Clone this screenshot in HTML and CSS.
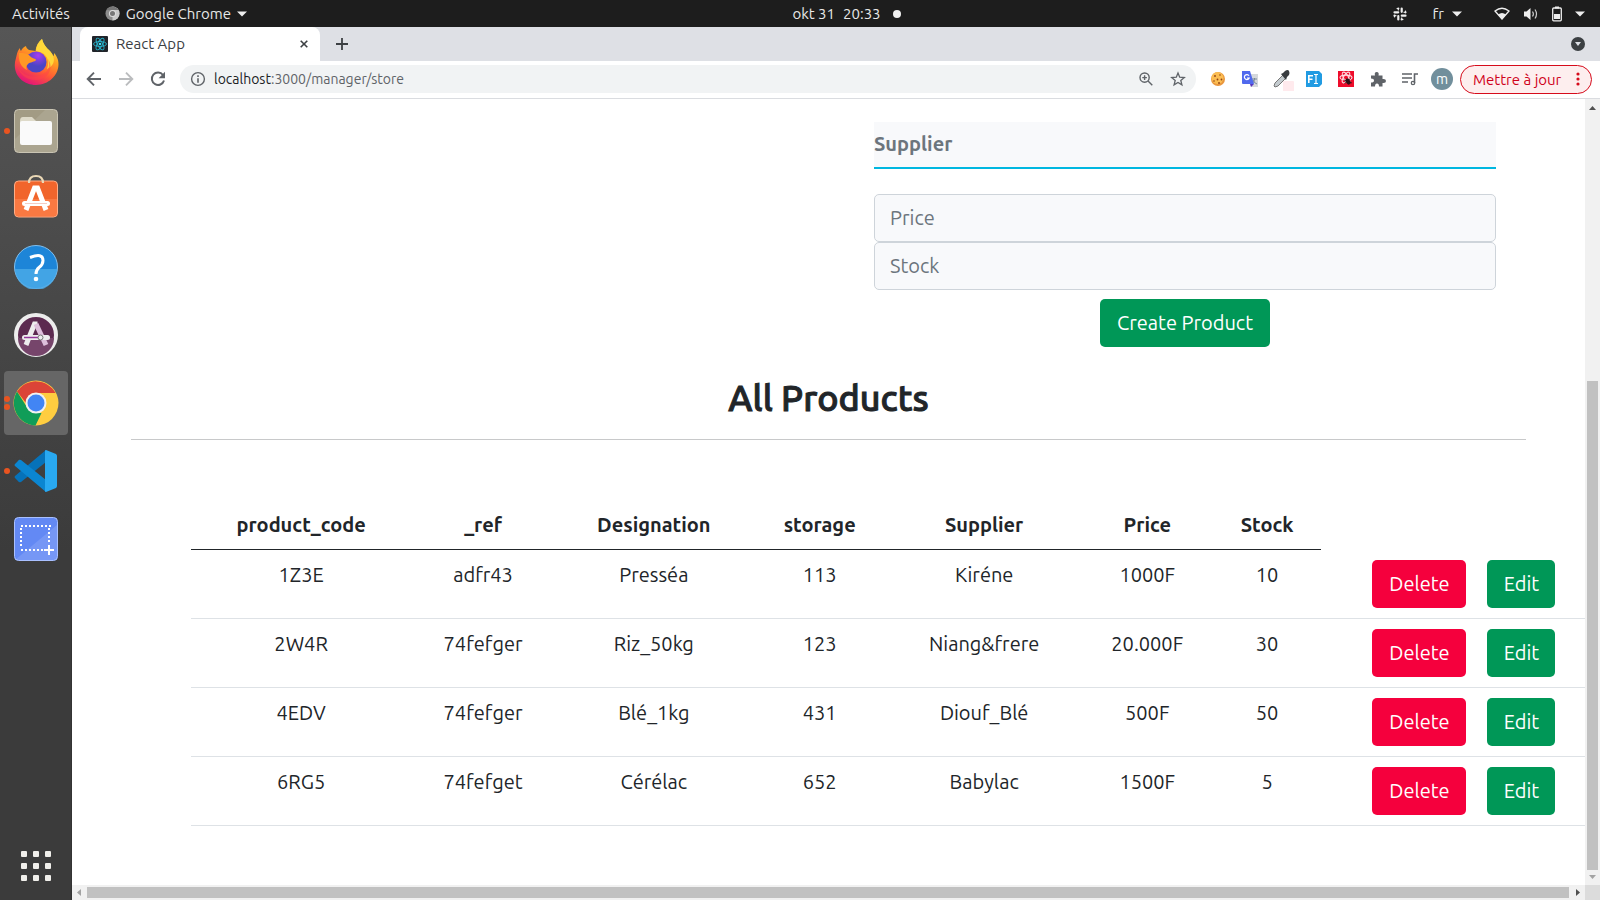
FILE: index.html
```html
<!DOCTYPE html>
<html lang="fr">
<head>
<meta charset="utf-8">
<title>React App</title>
<link rel="stylesheet" href="styles.css">
</head>
<body>
<header class="topbar">
  <div class="topbar-left">
    <button class="top-item">Activités</button>
    <button class="top-item app-menu">
      <svg width="15" height="15" viewBox="0 0 16 16"><circle cx="8" cy="8" r="7.500" fill="#8c8c8c"/><path d="M8 8V.5A7.500 7.500 0 0 1 8 15.500z" fill="#c9c9c9"/><path d="M1.500 4.200A7.500 7.500 0 0 1 14.500 4.200H8z" fill="#777"/><circle cx="8" cy="8" r="3.800" fill="#ddd"/><circle cx="8" cy="8" r="2.700" fill="#777"/></svg>
      <span>Google Chrome</span>
      <svg width="10" height="6" viewBox="0 0 10 6"><path d="M0 .5h10L5 5.500z" fill="#eee"/></svg>
    </button>
  </div>
  <button class="top-item clock"><span>okt 31</span><span>20:33</span><i class="dot"></i></button>
  <div class="topbar-right">
    <svg width="14" height="14" viewBox="0 0 14 14" stroke="#eee" stroke-width="2.200" stroke-linecap="round" fill="none"><path d="M5.300 1.500v.1M8.700 1.500v3.300M1.500 5.300h3.700M12.500 5.300h-.1M1.500 8.700h.1M5.300 9.200v3.300M8.800 8.700h3.700M8.700 12.400v.1"/><path d="M4 1.500h1.300v1.600M12.500 4v1.300h-1.600M1.500 10V8.700h1.600M10 12.500H8.700v-1.600" stroke-width="1"/></svg>
    <button class="top-item lang"><span>fr</span><svg width="10" height="6" viewBox="0 0 10 6"><path d="M0 .5h10L5 5.500z" fill="#eee"/></svg></button>
    <button class="top-item status" aria-label="Système">
      <svg width="16" height="13" viewBox="0 0 16 13"><path d="M1 4Q8-1.500 15 4L8 12z" fill="none" stroke="#eee" stroke-width="1.300"/><path d="M4 7.500Q8 4.500 12 7.500L8 12.500z" fill="#eee"/></svg>
      <svg width="16" height="14" viewBox="0 0 16 14"><path d="M1 4.500h2.500L7.500 1v12L3.500 9.500H1z" fill="#eee"/><path d="M9.500 4.500q1.800 2.500 0 5M12 2.500q3 4.500 0 9" fill="none" stroke="#ccc" stroke-width="1.200"/></svg>
      <svg width="10" height="16" viewBox="0 0 10 16"><path d="M3 .5h4v2H3zM2 8h6v5H2z" fill="#eee"/><rect x=".7" y="2" width="8.600" height="12.800" rx="1" fill="none" stroke="#eee" stroke-width="1.300"/></svg>
      <svg width="10" height="6" viewBox="0 0 10 6"><path d="M0 .5h10L5 5.500z" fill="#eee"/></svg>
    </button>
  </div>
</header>
<div class="desktop">
  <nav class="dock" aria-label="Dock">
    <button class="dock-item" aria-label="Firefox"><svg width="46" height="48" viewBox="0 0 46 48">
      <defs><linearGradient id="ffx" x1=".8" y1="0" x2=".3" y2="1"><stop offset="0" stop-color="#fff44f"/><stop offset=".35" stop-color="#ffa420"/><stop offset=".65" stop-color="#ff5a35"/><stop offset="1" stop-color="#e0107d"/></linearGradient><radialGradient id="ffp" cx=".6" cy=".2"><stop offset="0" stop-color="#a83cf0"/><stop offset="1" stop-color="#4b45c4"/></radialGradient></defs>
      <path d="M29 0c-4 3-6 7-6.500 12L16 11c-2-1-3-3-3-4-3 1-4 3-5 5-1-1-1-2-1-3-3 3-3 7-4 10C-2 34 9 46 23 46s25-12 22-25c-1-3-2-5-4-7 0 1 0 3-.5 3C38 11 31 9 29 0z" fill="url(#ffx)"/>
      <path d="M29 0c-4 4-6 8-6 12 9 1 15 8 11 18 7-3 8-9 6-13C38 11 31 9 29 0z" fill="#ffd83a"/>
      <circle cx="23" cy="23" r="10.500" fill="url(#ffp)"/><path d="M6 14c5 0 8 0 11 3 2 3 6 2 6 4-1 2-6 2-8 4-2 2-2 4-1 6-6-3-9-9-8-17z" fill="#ff9824"/><path d="M4 25c3 12 19 17 29 8 3-3 4-8 2-13 6 8 1 20-11 21C13 42 5 34 4 25z" fill="#ff4348" opacity=".5"/></svg></button>
    <button class="dock-item" aria-label="Fichiers"><i class="run"></i><svg width="44" height="44" viewBox="0 0 44 44"><rect x=".5" y=".5" width="43" height="43" rx="4" fill="#a29b84" stroke="#c9c4b3"/><path d="M1 30L31 1h9q3 0 3 3v36q0 3-3 3H4q-3 0-3-3z" fill="#fff" opacity=".1"/><path d="M6 12q0-4 3-4h9l4 4h14v6H6z" fill="#dedac9"/><rect x="6" y="12" width="32" height="24" rx="2" fill="#fafafa"/></svg></button>
    <button class="dock-item" aria-label="Logiciels"><svg width="44" height="50" viewBox="0 0 44 50"><rect x=".5" y="7" width="43" height="36" rx="4" fill="#f1652c" stroke="#ffad86"/><path d="M1 25h42v14q0 3-3 3H4q-3 0-3-3z" fill="#ff8b55" opacity=".55"/><path d="M15 9q0-7 7-7t7 7" fill="none" stroke="#ead8b6" stroke-width="2.200"/><path d="M12 36L20.500 14h3L32 36" stroke="#fff" stroke-width="5" fill="none"/><rect x="8" y="27" width="28" height="5" rx="2.500" fill="#fff"/><path d="M11 29.500h22" stroke="#f5ccc2"/></svg></button>
    <button class="dock-item" aria-label="Aide"><svg width="44" height="44" viewBox="0 0 44 44"><circle cx="22" cy="22" r="21.500" fill="#1d85d8" stroke="#80bfee"/><path d="M1 24h42A21 21 0 0 1 1 24z" fill="#4cabe8" opacity=".8"/><path d="M16 12.500q13-5 13 3 0 4-4 7-3 2.500-3 6.500" fill="none" stroke="#fff" stroke-width="3"/><circle cx="22" cy="34" r="2.300" fill="#fff"/></svg></button>
    <button class="dock-item" aria-label="Mise à jour"><svg width="44" height="44" viewBox="0 0 44 44"><circle cx="22" cy="22" r="20" fill="#5c2a50" stroke="#ececec" stroke-width="4"/><path d="M4 25h36A18 18 0 0 1 4 25z" fill="#76456b"/><path d="M12 32L20.500 11h3" stroke="#eee" stroke-width="5" fill="none"/><path d="M22 11l10 21" stroke="#dec0dc" stroke-width="5"/><rect x="8" y="22" width="28" height="5" rx="2.500" fill="#eee"/><path d="M10 24.500h17" stroke="#94369a" stroke-width="1.500"/><circle cx="26.500" cy="24.500" r="2.500" fill="#eee" stroke="#777"/></svg></button>
    <button class="dock-item active" aria-label="Google Chrome"><i class="run"></i><i class="run"></i><svg width="46" height="46" viewBox="0 0 46 46"><circle cx="23" cy="23" r="22.500" fill="#ffcd40"/><path d="M4 11.500A22.500 22.500 0 0 1 42.500 13H23a10 10 0 0 0-10 10z" fill="#db4437"/><path d="M4 11.500L14.500 28q3 5 9 5h5L22.500 45.500A22.500 22.500 0 0 1 4 11.500z" fill="#109d58"/><circle cx="23" cy="23" r="10.500" fill="#f1f1f1"/><circle cx="23" cy="23" r="8.500" fill="#4285f4"/></svg></button>
    <button class="dock-item" aria-label="Visual Studio Code"><i class="run"></i><svg width="44" height="44" viewBox="0 0 44 44"><path d="M32 1v12L7 33q-2 1-3-1l-3-3q-1-1 0-2z" fill="#0672b9"/><path d="M32 43V31L7 11q-2-1-3 1l-3 3q-1 1 0 2z" fill="#0b86d1"/><path d="M32 1l10 4q1 1 1 2v30q0 1-1 2l-10 4q-1 0-1-1V2q0-1 1-1z" fill="#29a9f1"/></svg></button>
    <button class="dock-item" aria-label="Capture"><svg width="44" height="44" viewBox="0 0 44 44"><rect x=".5" y=".5" width="43" height="43" rx="4" fill="#6389f4" stroke="#a9c0ff"/><path d="M1 43L43 8v32q0 3-3 3z" fill="#fff" opacity=".12"/><path d="M7 9h30M7 33h23M35 11v16M7 11v20" fill="none" stroke="#fff" stroke-width="2" stroke-dasharray="2 2"/><path d="M35 28v10M30 33h10" stroke="#fff" stroke-width="2"/></svg></button>
    <button class="dock-item apps" aria-label="Applications"><svg width="30" height="30" viewBox="0 0 30 30" fill="#f0efeb"><rect width="6" height="6" rx="1"/><rect x="12" width="6" height="6" rx="1"/><rect x="24" width="6" height="6" rx="1"/><rect y="12" width="6" height="6" rx="1"/><rect x="12" y="12" width="6" height="6" rx="1"/><rect x="24" y="12" width="6" height="6" rx="1"/><rect y="24" width="6" height="6" rx="1"/><rect x="12" y="24" width="6" height="6" rx="1"/><rect x="24" y="24" width="6" height="6" rx="1"/></svg></button>
  </nav>
  <div class="browser">
    <div class="tabstrip">
      <div class="tab">
        <svg width="16" height="16" viewBox="0 0 16 16"><rect width="16" height="16" rx="1" fill="#20242a"/><g fill="none" stroke="#28b3cc" stroke-width=".9"><ellipse cx="8" cy="8" rx="6.500" ry="2.500"/><ellipse cx="8" cy="8" rx="6.500" ry="2.500" transform="rotate(60 8 8)"/><ellipse cx="8" cy="8" rx="6.500" ry="2.500" transform="rotate(120 8 8)"/></g><circle cx="8" cy="8" r="1.300" fill="#3cdcf5"/></svg>
        <span class="tab-title">React App</span>
        <button class="icon-btn" aria-label="Fermer"><svg width="8" height="8" viewBox="0 0 8 8"><path d="M.7.7l6.600 6.600M7.300.7L.7 7.300" stroke="#3c4043" stroke-width="1.600"/></svg></button>
      </div>
      <button class="icon-btn new-tab" aria-label="Nouvel onglet"><svg width="12" height="12" viewBox="0 0 12 12"><path d="M6 0v12M0 6h12" stroke="#3c4043" stroke-width="1.800"/></svg></button>
      <button class="icon-btn tab-search" aria-label="Rechercher"><svg width="14" height="14" viewBox="0 0 14 14"><circle cx="7" cy="7" r="7" fill="#3c4043"/><path d="M4 5h6L7 9z" fill="#dee1e6"/></svg></button>
    </div>
    <div class="toolbar">
      <div class="nav-buttons">
        <button class="icon-btn" aria-label="Retour"><svg width="16" height="16" viewBox="0 0 16 16"><path d="M15 8H2.500M8 1.700L1.700 8 8 14.300" fill="none" stroke="#5f6368" stroke-width="1.900"/></svg></button>
        <button class="icon-btn" aria-label="Avancer"><svg width="16" height="16" viewBox="0 0 16 16"><path d="M1 8h12.500M8 1.700L14.300 8 8 14.300" fill="none" stroke="#babcbe" stroke-width="1.900"/></svg></button>
        <button class="icon-btn" aria-label="Actualiser"><svg width="16" height="16" viewBox="0 0 16 16"><path d="M13 4A6.200 6.200 0 1 0 14 9.500" fill="none" stroke="#5f6368" stroke-width="2"/><path d="M15 .8v6.400H8.600z" fill="#5f6368"/></svg></button>
      </div>
      <div class="omnibox">
        <svg width="16" height="16" viewBox="0 0 16 16"><circle cx="8" cy="8" r="6.400" fill="none" stroke="#5f6368" stroke-width="1.400"/><path d="M8 4.200v1.700M8 7.200v4.600" stroke="#5f6368" stroke-width="1.600"/></svg>
        <a class="url" href="#"><span class="host">localhost</span>:3000/manager/store</a>
        <button class="icon-btn" aria-label="Zoom"><svg width="14" height="14" viewBox="0 0 14 14" fill="none" stroke="#5f6368" stroke-width="1.400"><circle cx="5.600" cy="5.600" r="4.600"/><path d="M9 9l4.300 4.300M3.300 5.600h4.600M5.600 3.300v4.600"/></svg></button>
        <button class="icon-btn" aria-label="Favori"><svg width="16" height="16" viewBox="0 0 16 16"><path d="M8 2l1.700 4.200 4.600.3-3.500 3 1.100 4.400L8 11.500l-3.900 2.400 1.100-4.400-3.500-3 4.600-.3z" fill="none" stroke="#5f6368" stroke-width="1.300"/></svg></button>
      </div>
      <div class="extensions">
        <button class="icon-btn" aria-label="Cookies"><svg width="16" height="16" viewBox="0 0 16 16"><circle cx="8" cy="8" r="7" fill="#e9963d"/><circle cx="7.500" cy="7" r="6" fill="#fbbd52"/><g fill="#8f4216"><circle cx="5" cy="5" r=".9"/><circle cx="10" cy="4" r=".8"/><circle cx="7.500" cy="8.500" r=".9"/><circle cx="11.500" cy="8.500" r=".9"/><circle cx="4" cy="10" r=".8"/><circle cx="9" cy="12" r=".9"/></g></svg></button>
        <button class="icon-btn" aria-label="Traduction"><svg width="16" height="16" viewBox="0 0 16 16"><path d="M5 3h11v13H9z" fill="#d5d8dc"/><path d="M10 8h5M12.500 7v1q0 3-3 5M11 9q1 3 4 4" stroke="#789" fill="none"/><path d="M0 0h8l4 13H1q-1 0-1-1z" fill="#5069ed"/><path d="M8 13h4l-3 3z" fill="#5936bc"/><path d="M7 4.700A2.500 2.500 0 1 0 7.200 7H5" stroke="#fff" stroke-width="1.200" fill="none"/></svg></button>
        <button class="icon-btn" aria-label="Pipette"><svg width="24" height="24" viewBox="0 0 24 24"><rect x="13" y="14" width="11" height="11" rx="1" fill="#ffeaed"/><path d="M4 19l1-3 8-8 3 3-8 8-3 1z" fill="#c4cbcf" stroke="#777"/><path d="M11 7l2-1 2-2q3-2 4 0t0 4l-2 2-1 3z" fill="#383c40"/></svg></button>
        <button class="icon-btn" aria-label="Champs"><svg width="16" height="16" viewBox="0 0 16 16"><path d="M0 0h13l3 3v10l-3 3H0z" fill="#219be2"/><path d="M2.800 12V4.700h4.200M2.800 8.200h3.700" fill="none" stroke="#fff" stroke-width="1.600"/><path d="M8 3.500h4M10 3.500v9M8 12.500h4" fill="none" stroke="#fff" stroke-width="1.200"/></svg></button>
        <button class="icon-btn" aria-label="React Developer Tools"><svg width="16" height="16" viewBox="0 0 16 16"><rect width="16" height="16" fill="#ee0c2b"/><g fill="none" stroke="#ffdbe0" stroke-width="1.100"><ellipse cx="8" cy="6.500" rx="6" ry="2.400"/><ellipse cx="8" cy="6.500" rx="6" ry="2.400" transform="rotate(60 8 6.500)"/><ellipse cx="8" cy="6.500" rx="6" ry="2.400" transform="rotate(120 8 6.500)"/></g><ellipse cx="10" cy="10.500" rx="2.200" ry="3.300" fill="#301016" transform="rotate(-30 10 10.500)"/><path d="M6 9l8 3M6.500 12.500l6-5" stroke="#301016" stroke-width=".8"/></svg></button>
        <button class="icon-btn" aria-label="Extensions"><svg width="16" height="16" viewBox="0 0 16 16"><path d="M1 4.500h4q-1-3.500 1.700-3.500T8.500 4.500h4V8q3.500-.5 3.500 2t-3.500 2v3.500H9q0-3-2-3t-2 3H1V11.500q3 0 3-2t-3-2z" fill="#5f6368"/></svg></button>
        <button class="icon-btn" aria-label="Médias"><svg width="16" height="14" viewBox="0 0 16 14"><path d="M0 2h10M0 6h10M0 10h6M12.500 11V2H16" fill="none" stroke="#5f6368" stroke-width="1.600"/><circle cx="11" cy="11" r="1.700" fill="none" stroke="#5f6368" stroke-width="1.300"/></svg></button>
        <button class="icon-btn avatar">m</button>
      </div>
      <button class="update"><span>Mettre à jour</span><svg width="4" height="14" viewBox="0 0 4 14" fill="#d60b1b"><circle cx="2" cy="2" r="1.600"/><circle cx="2" cy="7" r="1.600"/><circle cx="2" cy="12" r="1.600"/></svg></button>
    </div>
    <div class="viewport">
      <main class="page">
        <form class="product-form">
          <input class="supplier" type="text" placeholder="Supplier" aria-label="Supplier">
          <input class="field" type="text" placeholder="Price" aria-label="Price">
          <input class="field" type="text" placeholder="Stock" aria-label="Stock">
          <button class="btn btn-green create" type="button">Create Product</button>
        </form>
        <h1 class="title">All Products</h1>
        <hr class="rule">
        <div class="table-wrap">
          <table class="products">
            <colgroup><col class="c-code"><col class="c-ref"><col class="c-name"><col class="c-storage"><col class="c-supplier"><col class="c-price"><col class="c-stock"><col></colgroup>
            <thead><tr><th>product_code</th><th>_ref</th><th>Designation</th><th>storage</th><th>Supplier</th><th>Price</th><th>Stock</th></tr></thead>
            <tbody>
              <tr><td>1Z3E</td><td>adfr43</td><td>Presséa</td><td>113</td><td>Kiréne</td><td>1000F</td><td>10</td><td><div class="actions"><button class="btn btn-red">Delete</button><button class="btn btn-green">Edit</button></div></td></tr>
              <tr><td>2W4R</td><td>74fefger</td><td>Riz_50kg</td><td>123</td><td>Niang&amp;frere</td><td>20.000F</td><td>30</td><td><div class="actions"><button class="btn btn-red">Delete</button><button class="btn btn-green">Edit</button></div></td></tr>
              <tr><td>4EDV</td><td>74fefger</td><td>Blé_1kg</td><td>431</td><td>Diouf_Blé</td><td>500F</td><td>50</td><td><div class="actions"><button class="btn btn-red">Delete</button><button class="btn btn-green">Edit</button></div></td></tr>
              <tr><td>6RG5</td><td>74fefget</td><td>Cérélac</td><td>652</td><td>Babylac</td><td>1500F</td><td>5</td><td><div class="actions"><button class="btn btn-red">Delete</button><button class="btn btn-green">Edit</button></div></td></tr>
            </tbody>
          </table>
        </div>
      </main>
      <div class="vbar"><svg width="7" height="4" viewBox="0 0 7 4"><path d="M0 4h7L3.500 0z" fill="#505050"/></svg><div class="vtrack"><div class="vthumb"></div></div><svg width="7" height="4" viewBox="0 0 7 4"><path d="M0 0h7L3.500 4z" fill="#a3a3a3"/></svg></div>
      <div class="hbar"><svg width="4" height="7" viewBox="0 0 4 7"><path d="M4 0v7L0 3.500z" fill="#a3a3a3"/></svg><div class="hthumb"></div><svg width="4" height="7" viewBox="0 0 4 7"><path d="M0 0v7l4-3.500z" fill="#505050"/></svg></div>
      <div class="corner"></div>
    </div>
  </div>
</div>
</body>
</html>
```
FILE: styles.css
```css
* { box-sizing: border-box; }

body {
  margin: 0;
  height: 100vh;
  overflow: hidden;
  display: flex;
  flex-direction: column;
  font-family: Ubuntu, "Noto Sans", "Open Sans", sans-serif;
  font-size: 15px;
  color: #212529;
}

button {
  border: 0;
  padding: 0;
  background: none;
  font: inherit;
  color: inherit;
}

svg { display: block; flex: none; }

/* System bar */
.topbar {
  flex: none;
  display: grid;
  grid-template-columns: 1fr auto 1fr;
  align-items: center;
  height: 27px;
  padding: 0 15px 0 12px;
  background: #1d1d1d;
  color: #e8e8e8;
}
.topbar-left, .topbar-right, .top-item { display: flex; align-items: center; }
.topbar-left { gap: 35px; }
.app-menu { gap: 6px; }
.clock { gap: 8px; padding-left: 96px; }
.dot { width: 8px; height: 8px; margin-left: 4px; border-radius: 50%; background: #f0f0f0; }
.topbar-right { justify-content: flex-end; gap: 26px; }
.lang { gap: 8px; }
.status { gap: 13px; padding-left: 6px; }

.desktop { flex: 1; min-height: 0; display: flex; }

/* Dock */
.dock {
  flex: none;
  display: flex;
  flex-direction: column;
  gap: 4px;
  width: 72px;
  padding: 4px 4px 2px;
  background: linear-gradient(#565656, #3b3b3b 60%);
  border-right: 1px solid #333;
}
.dock-item {
  position: relative;
  display: flex;
  align-items: center;
  justify-content: center;
  width: 64px;
  height: 64px;
  border-radius: 4px;
}
.dock-item.active { background: #666; }
.dock-item.apps { margin-top: auto; }
.run {
  position: absolute;
  left: 0;
  top: 29px;
  width: 6px;
  height: 6px;
  border-radius: 50%;
  background: #e95420;
}
.active .run { top: 25px; }
.active .run + .run { top: 33px; }

/* Browser */
.browser { flex: 1; min-width: 0; display: flex; flex-direction: column; background: #fff; }
.icon-btn { display: flex; align-items: center; justify-content: center; flex: none; }
.tabstrip {
  display: flex;
  align-items: center;
  height: 34px;
  padding: 0 15px 0 8px;
  background: #dee0e5;
}
.tab {
  display: flex;
  align-items: center;
  gap: 8px;
  width: 240px;
  height: 34px;
  padding: 0 12px;
  border-radius: 8px 8px 0 0;
  background: #fff;
  color: #3c4043;
}
.tab-title { flex: 1; padding-bottom: 1px; }
.new-tab { margin-left: 16px; }
.tab-search { margin-left: auto; }

.toolbar {
  display: flex;
  align-items: center;
  height: 38px;
  padding: 0 8px 1px 14px;
  border-bottom: 1px solid #dadce0;
}
.nav-buttons { display: flex; gap: 16px; }
.omnibox {
  flex: 1;
  display: flex;
  align-items: center;
  gap: 8px;
  height: 28px;
  margin-left: 14px;
  padding: 0 6px 0 10px;
  border-radius: 14px;
  background: #f1f3f4;
}
.url { flex: 1; font-size: 14px; color: #5f6368; text-decoration: none; }
.host { color: #202124; }
.omnibox .icon-btn { width: 24px; }
.extensions { display: flex; align-items: center; gap: 8px; margin: 0 7px 0 10px; }
.extensions .icon-btn { width: 24px; height: 24px; }
.extensions .avatar {
  width: 22px;
  height: 22px;
  margin-left: 1px;
  border-radius: 50%;
  background: #718f9c;
  color: #fff;
  font-size: 14px;
}
.update {
  display: flex;
  align-items: center;
  justify-content: space-between;
  width: 132px;
  height: 29px;
  padding: 0 11px 0 12px;
  border: 1px solid #d60b1b;
  border-radius: 15px;
  background: #fdeeee;
  color: #d0021b;
  white-space: nowrap;
}

.viewport {
  flex: 1;
  min-height: 0;
  display: grid;
  grid-template: minmax(0, 1fr) 15px / minmax(0, 1fr) 15px;
}

/* Store page */
.page { overflow: hidden; padding: 23px 0 0 59px; font-size: 20px; line-height: 30px; }
.product-form {
  display: flex;
  flex-direction: column;
  margin-left: calc(50% + 16px);
  padding-right: 89px;
}
.supplier, .field {
  width: 100%;
  background: #f8f9fb;
  font: inherit;
  color: #495057;
}
.supplier {
  height: 47px;
  margin-bottom: 25px;
  padding: 0 0 2px;
  border: 0;
  border-bottom: 2px solid #00b7e0;
  font-weight: 700;
}
.field {
  height: 48px;
  padding: 0 15px 1px;
  border: 1px solid #ced4da;
  border-radius: 5px;
}
.supplier::placeholder, .field::placeholder { color: #6c757d; opacity: 1; }
.btn {
  height: 48px;
  padding: 0 15px 1px;
  border-radius: 5px;
  color: #fff;
}
.btn-green { background: #009757; }
.btn-red { background: #f5003d; }
.create { align-self: center; width: 170px; margin-top: 9px; }
.title {
  margin: 29px 59px 0 0;
  font-size: 36px;
  font-weight: 500;
  line-height: 44px;
  text-align: center;
  -webkit-text-stroke: 1px #212529;
}
.rule { margin: 19px 59px 60px 0; border: 0; border-top: 1px solid #c8c9ca; }
.table-wrap { padding-left: 60px; }
.products { width: 100%; table-layout: fixed; border-spacing: 0; text-align: center; }
.c-code { width: 15.8%; }
.c-ref { width: 10.3%; }
.c-name { width: 14.2%; }
.c-storage { width: 9.6%; }
.c-supplier { width: 14%; }
.c-price { width: 9.4%; }
.c-stock { width: 7.8%; }
.products th { padding: 10px 0 9px; border-bottom: 1px solid #212529; }
.products td { padding: 10px 0; border-bottom: 1px solid #dee2e6; vertical-align: top; }
.actions { display: flex; gap: 21px; padding-left: 51px; }
.actions .btn-red { width: 94px; }
.actions .btn-green { width: 68px; }

/* Scroll bars */
.vbar, .hbar { display: flex; align-items: center; background: #f1f1f1; }
.vbar { flex-direction: column; padding: 7px 0 6px; }
.vtrack { flex: 1; display: flex; flex-direction: column; justify-content: flex-end; margin: 4px 0 5px; }
.vthumb { width: 11px; height: 64.7%; background: #c1c1c1; }
.hbar { padding: 0 5px; }
.hthumb { flex: 1; height: 11px; margin: 0 7px 0 6px; background: #c1c1c1; }
.corner { background: #dcdcdc; }
```
